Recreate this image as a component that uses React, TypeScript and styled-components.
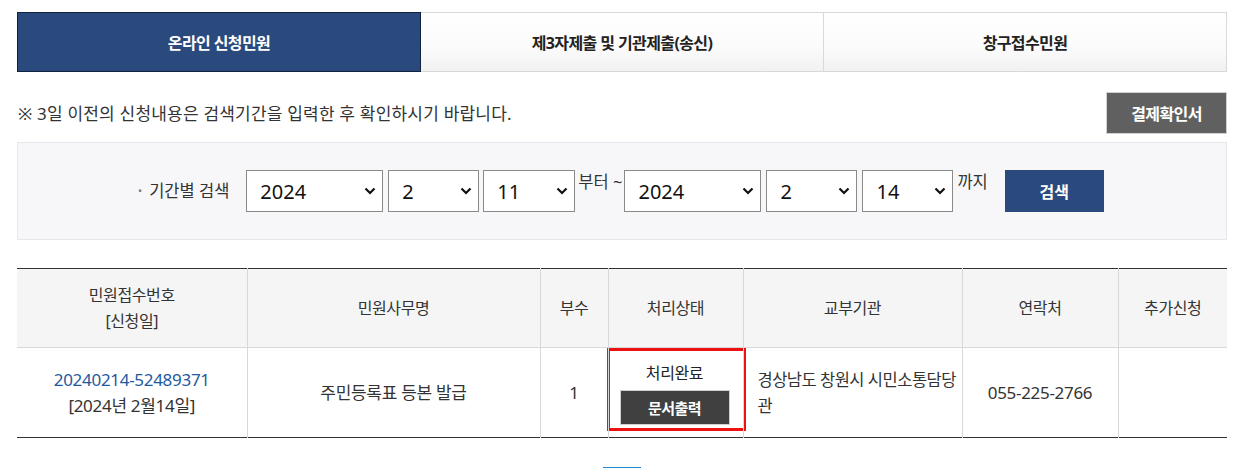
import React from "react";
import styled, { createGlobalStyle } from "styled-components";

const Global = createGlobalStyle`
  html, body { margin: 0; padding: 0; background: #fff; }
  body { font-family: "Noto Sans", "Noto Sans CJK KR", sans-serif; color: #333; }
  * { box-sizing: border-box; }
`;

const Page = styled.div`
  width: 1210px;
  margin: 12px 0 0 17px;
`;

const Tabs = styled.div`
  display: grid;
  grid-template-columns: 404px 403px 403px;
  height: 60px;
`;

const Tab = styled.div<{ $active?: boolean }>`
  display: flex;
  align-items: center;
  justify-content: center;
  font-size: 16px;
  font-weight: 700;
  letter-spacing: -0.6px;
  color: ${(p) => (p.$active ? "#fff" : "#222")};
  background: ${(p) =>
    p.$active ? "#2a4a7d" : "linear-gradient(#ffffff 0%, #fbfbfb 60%, #f1f1f1 100%)"};
  border: 1px solid ${(p) => (p.$active ? "#12223e" : "#d9d9d9")};
  border-left-width: ${(p) => (p.$active ? "1px" : "0")};
`;

const NoticeRow = styled.div`
  display: flex;
  align-items: center;
  justify-content: space-between;
  margin-top: 20px;
  height: 42px;
`;

const Notice = styled.p`
  margin: -2px 0 0 1px;
  font-size: 17px;
  letter-spacing: 0.2px;
  color: #333;
`;

const ReceiptButton = styled.button`
  width: 121px;
  height: 42px;
  background: #606060;
  border: 1px solid #d0d0d0;
  color: #fff;
  font-family: inherit;
  font-size: 16px;
  font-weight: 700;
  letter-spacing: -0.6px;
  cursor: pointer;
`;

const SearchBox = styled.div`
  margin-top: 8px;
  height: 98px;
  background: #f7f7f9;
  border: 1px solid #e6e6ec;
  display: flex;
  align-items: center;
  padding-left: 120px;
`;

const Label = styled.span`
  font-size: 16.5px;
  letter-spacing: 0;
  color: #333;
  margin-right: 17px;
  margin-top: -2px;
  &::before {
    content: "•";
    color: #777;
    font-size: 11px;
    margin-right: 7px;
    vertical-align: 2px;
  }
`;

const SelectWrap = styled.div<{ $w: number; $gap?: number }>`
  position: relative;
  width: ${(p) => p.$w}px;
  height: 42px;
  border: 1px solid #8a8a8a;
  background: #fff;
  display: flex;
  align-items: center;
  padding-left: 13px;
  font-size: 20px;
  color: #111;
  margin-right: ${(p) => p.$gap ?? 5}px;
`;

const Chevron = styled.svg`
  position: absolute;
  right: 6px;
  top: 50%;
  margin-top: -4px;
`;

const Word = styled.span<{ $mr?: number }>`
  font-size: 16.5px;
  letter-spacing: 0;
  line-height: 24px;
  color: #333;
  align-self: flex-start;
  margin-top: 27px;
  margin-right: ${(p) => p.$mr ?? 2}px;
`;

const SearchButton = styled.button`
  width: 99px;
  height: 42px;
  margin-left: 15px;
  background: #2a4a7d;
  border: none;
  color: #fff;
  font-family: inherit;
  font-size: 16px;
  font-weight: 700;
  cursor: pointer;
`;

const Table = styled.table`
  width: 1210px;
  margin-top: 28px;
  border-collapse: collapse;
  table-layout: fixed;
  border-top: 1px solid #333;
  border-bottom: 1px solid #333;
`;

const Th = styled.th`
  height: 79px;
  background: #f5f5f5;
  font-weight: 400;
  font-size: 16px;
  letter-spacing: -0.4px;
  line-height: 26px;
  color: #333;
  border-left: 1px solid #d8d8d8;
  border-bottom: 1px solid #d8d8d8;
  &:first-child { border-left: none; }
`;

const Td = styled.td<{ $align?: string }>`
  height: 90px;
  font-size: 17px;
  letter-spacing: -0.3px;
  line-height: 26px;
  color: #333;
  text-align: ${(p) => p.$align ?? "center"};
  border-left: 1px solid #d8d8d8;
  padding: 0;
  &:first-child { border-left: none; }
`;

const LinkNo = styled.a`
  color: #1f5a9e;
  text-decoration: none;
  display: block;
  letter-spacing: -0.3px;
`;

const StatusCell = styled.td`
  height: 90px;
  padding: 0;
  border-left: 1px solid #d8d8d8;
  vertical-align: top;
`;

const StatusBox = styled.div`
  margin-left: -2px;
  width: 139px;
  height: 83px;
  border: 3px solid #ee1111;
  display: flex;
  flex-direction: column;
  align-items: center;
  padding-top: 9px;
  padding-right: 3px;
  font-size: 16px;
  letter-spacing: -0.4px;
  color: #222;
`;

const PrintButton = styled.button`
  margin-top: 6px;
  width: 110px;
  height: 35px;
  background: #404040;
  border: 1px solid #cfcfcf;
  color: #fff;
  font-family: inherit;
  font-size: 15px;
  font-weight: 700;
  letter-spacing: -0.6px;
`;

const AgencyText = styled.div`
  padding: 0 4px 0 14px;
  font-size: 16.5px;
  letter-spacing: -0.5px;
`;

const Pager = styled.div`
  display: flex;
  justify-content: center;
  margin-top: 29px;
`;

const PageBtn = styled.div`
  width: 38px;
  height: 30px;
  border-top: 3px solid #1e88d8;
`;

const Select = ({ w, v, gap }: { w: number; v: string; gap?: number }) => (
  <SelectWrap $w={w} $gap={gap}>
    {v}
    <Chevron width="12" height="8" viewBox="0 0 12 8">
      <path d="M1.5 1.5 L6 6 L10.5 1.5" fill="none" stroke="#111" strokeWidth="2.2" />
    </Chevron>
  </SelectWrap>
);

export default function App() {
  return (
    <>
      <Global />
      <Page>
        <Tabs>
          <Tab $active>온라인 신청민원</Tab>
          <Tab>제3자제출 및 기관제출(송신)</Tab>
          <Tab>창구접수민원</Tab>
        </Tabs>
        <NoticeRow>
          <Notice>※ 3일 이전의 신청내용은 검색기간을 입력한 후 확인하시기 바랍니다.</Notice>
          <ReceiptButton>결제확인서</ReceiptButton>
        </NoticeRow>
        <SearchBox>
          <Label>기간별 검색</Label>
          <Select w={137} v="2024" />
          <Select w={91} v="2" gap={4} />
          <Select w={92} v="11" gap={3} />
          <Word $mr={2}>부터 ~</Word>
          <Select w={137} v="2024" />
          <Select w={91} v="2" />
          <Select w={91} v="14" gap={4} />
          <Word>까지</Word>
          <SearchButton>검색</SearchButton>
        </SearchBox>
        <Table>
          <colgroup>
            <col style={{ width: 230 }} />
            <col style={{ width: 293 }} />
            <col style={{ width: 68 }} />
            <col style={{ width: 135 }} />
            <col style={{ width: 219 }} />
            <col style={{ width: 156 }} />
            <col style={{ width: 109 }} />
          </colgroup>
          <thead>
            <tr>
              <Th>
                민원접수번호
                <br />
                [신청일]
              </Th>
              <Th>민원사무명</Th>
              <Th>부수</Th>
              <Th>처리상태</Th>
              <Th>교부기관</Th>
              <Th>연락처</Th>
              <Th>추가신청</Th>
            </tr>
          </thead>
          <tbody>
            <tr>
              <Td>
                <LinkNo href="#">20240214-52489371</LinkNo>
                [2024년 2월14일]
              </Td>
              <Td>주민등록표 등본 발급</Td>
              <Td>1</Td>
              <StatusCell>
                <StatusBox>
                  처리완료
                  <PrintButton>문서출력</PrintButton>
                </StatusBox>
              </StatusCell>
              <Td $align="left">
                <AgencyText>경상남도 창원시 시민소통담당관</AgencyText>
              </Td>
              <Td>055-225-2766</Td>
              <Td></Td>
            </tr>
          </tbody>
        </Table>
        <Pager>
          <PageBtn />
        </Pager>
      </Page>
    </>
  );
}
